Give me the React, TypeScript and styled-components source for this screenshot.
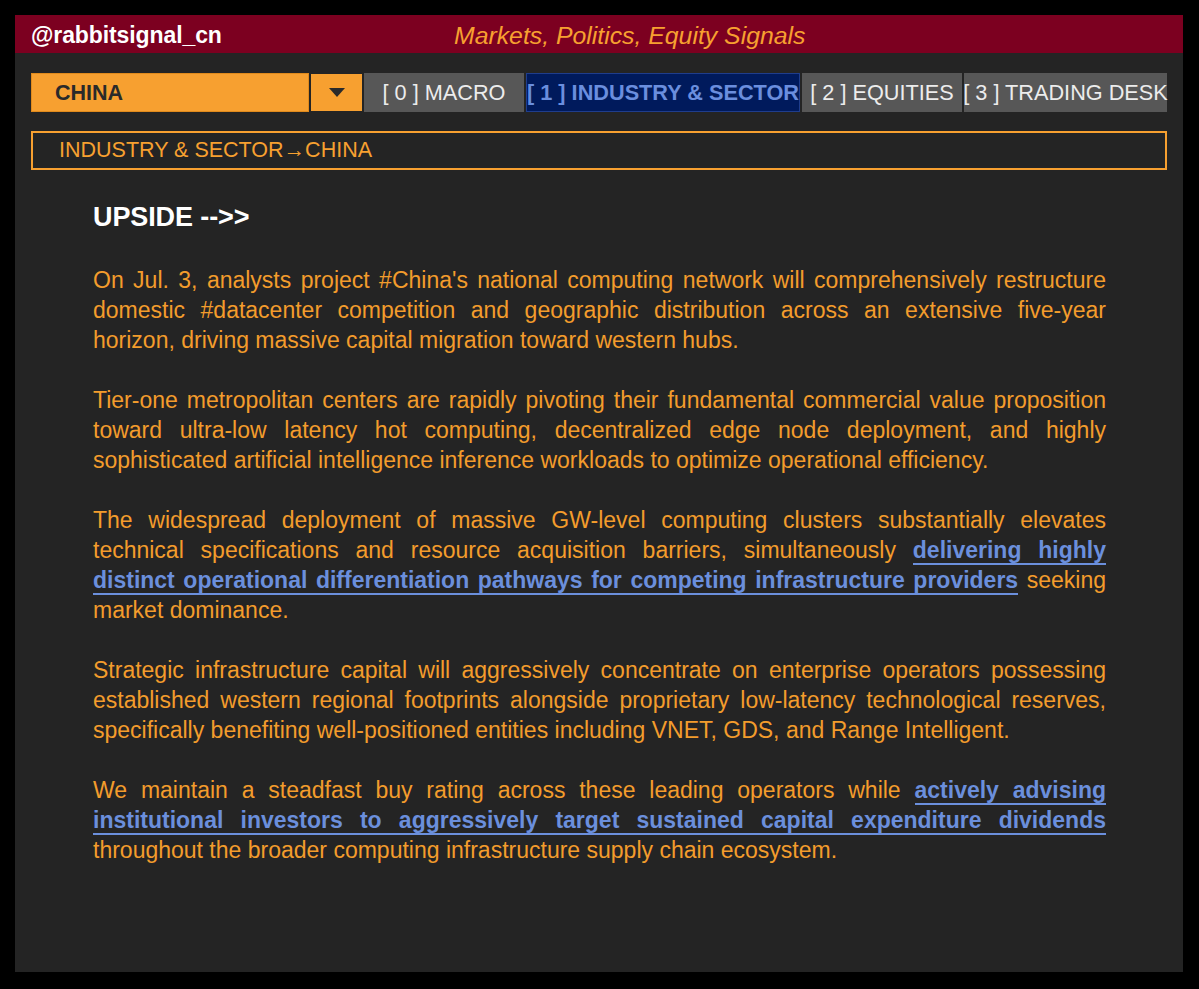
import styled, { createGlobalStyle } from "styled-components";

const GlobalStyle = createGlobalStyle`
  html, body {
    margin: 0;
    padding: 0;
    background: #000;
  }
  body {
    font-family: "Liberation Sans", Arial, sans-serif;
  }
`;

const Page = styled.div`
  padding: 15px 16px 17px 15px;
  background: #000;
`;

const Panel = styled.div`
  background: #242424;
  height: 957px;
  display: flex;
  flex-direction: column;
`;

const Header = styled.header`
  height: 38px;
  box-sizing: border-box;
  background: #7c0020;
  display: flex;
  align-items: center;
  padding: 3px 16px 0 16px;
`;

const Handle = styled.div`
  color: #fff;
  font-weight: bold;
  font-size: 23px;
  letter-spacing: -0.1px;
  width: 423px;
`;

const Tagline = styled.div`
  color: #f7a030;
  font-style: italic;
  font-size: 24.8px;
`;

const Body = styled.div`
  padding: 20px 16px 0 16px;
  display: flex;
  flex-direction: column;
`;

const TabRow = styled.nav`
  display: flex;
  gap: 2px;
  height: 39px;
`;

const Select = styled.div`
  width: 278px;
  background: #f7a030;
  border: 1px solid #e08a1c;
  box-sizing: border-box;
  color: #2a2a2a;
  font-weight: bold;
  font-size: 21.5px;
  display: flex;
  align-items: center;
  padding: 2px 0 0 23px;
`;

const Caret = styled.div`
  width: 51px;
  background: #f7a030;
  display: flex;
  align-items: center;
  justify-content: center;
  margin-top: 1px;
  margin-bottom: 1px;
`;

const Tab = styled.div<{ $active?: boolean; $w: number }>`
  width: ${(p) => p.$w}px;
  box-sizing: border-box;
  display: flex;
  align-items: center;
  justify-content: center;
  white-space: nowrap;
  font-size: 21.7px;
  background: ${(p) => (p.$active ? "#001a5c" : "#575757")};
  color: ${(p) => (p.$active ? "#6a8ede" : "#ececec")};
  font-weight: ${(p) => (p.$active ? "bold" : "normal")};
  border: 1px solid ${(p) => (p.$active ? "#1f3d8c" : "#575757")};
`;

const Crumb = styled.div`
  margin-top: 19px;
  height: 39px;
  box-sizing: border-box;
  border: 2px solid #f7a030;
  color: #f7a030;
  font-size: 21.5px;
  display: flex;
  align-items: center;
  padding-left: 26px;
`;

const Article = styled.article`
  padding: 31px 61px 0 62px;
`;

const Heading = styled.h2`
  margin: 0 0 32px 0;
  color: #fff;
  font-size: 27px;
  font-weight: bold;
  letter-spacing: -0.1px;
  line-height: 32px;
`;

const Para = styled.p`
  margin: 0 0 30px 0;
  color: #f39c2c;
  font-size: 23px;
  line-height: 30px;
  text-align: justify;
`;

const Link = styled.a`
  color: #6b8fdc;
  font-weight: bold;
  text-decoration: none;
  border-bottom: 2px solid #6b8fdc;
`;

const tabs = [
  { label: "[ 0 ] MACRO", w: 160 },
  { label: "[ 1 ] INDUSTRY & SECTOR", w: 274, active: true },
  { label: "[ 2 ] EQUITIES", w: 160 },
  { label: "[ 3 ] TRADING DESK", w: 203 },
];

export default function App() {
  return (
    <Page>
      <GlobalStyle />
      <Panel>
        <Header>
          <Handle>@rabbitsignal_cn</Handle>
          <Tagline>Markets, Politics, Equity Signals</Tagline>
        </Header>
        <Body>
          <TabRow>
            <Select>CHINA</Select>
            <Caret>
              <svg width="16" height="10" viewBox="0 0 16 10">
                <polygon points="0,0 16,0 8,9" fill="#2a2a2a" />
              </svg>
            </Caret>
            {tabs.map((t) => (
              <Tab key={t.label} $w={t.w} $active={t.active}>
                {t.label}
              </Tab>
            ))}
          </TabRow>
          <Crumb>INDUSTRY &amp; SECTOR→CHINA</Crumb>
          <Article>
            <Heading>UPSIDE --&gt;&gt;</Heading>
            <Para>
              On Jul. 3, analysts project #China's national computing network will comprehensively
              restructure domestic #datacenter competition and geographic distribution across an
              extensive five-year horizon, driving massive capital migration toward western hubs.
            </Para>
            <Para>
              Tier-one metropolitan centers are rapidly pivoting their fundamental commercial value
              proposition toward ultra-low latency hot computing, decentralized edge node deployment,
              and highly sophisticated artificial intelligence inference workloads to optimize
              operational efficiency.
            </Para>
            <Para>
              The widespread deployment of massive GW-level computing clusters substantially elevates
              technical specifications and resource acquisition barriers, simultaneously{" "}
              <Link>
                delivering highly distinct operational differentiation pathways for competing
                infrastructure providers
              </Link>{" "}
              seeking market dominance.
            </Para>
            <Para>
              Strategic infrastructure capital will aggressively concentrate on enterprise operators
              possessing established western regional footprints alongside proprietary low-latency
              technological reserves, specifically benefiting well-positioned entities including
              VNET, GDS, and Range Intelligent.
            </Para>
            <Para>
              We maintain a steadfast buy rating across these leading operators while{" "}
              <Link>
                actively advising institutional investors to aggressively target sustained capital
                expenditure dividends
              </Link>{" "}
              throughout the broader computing infrastructure supply chain ecosystem.
            </Para>
          </Article>
        </Body>
      </Panel>
    </Page>
  );
}
